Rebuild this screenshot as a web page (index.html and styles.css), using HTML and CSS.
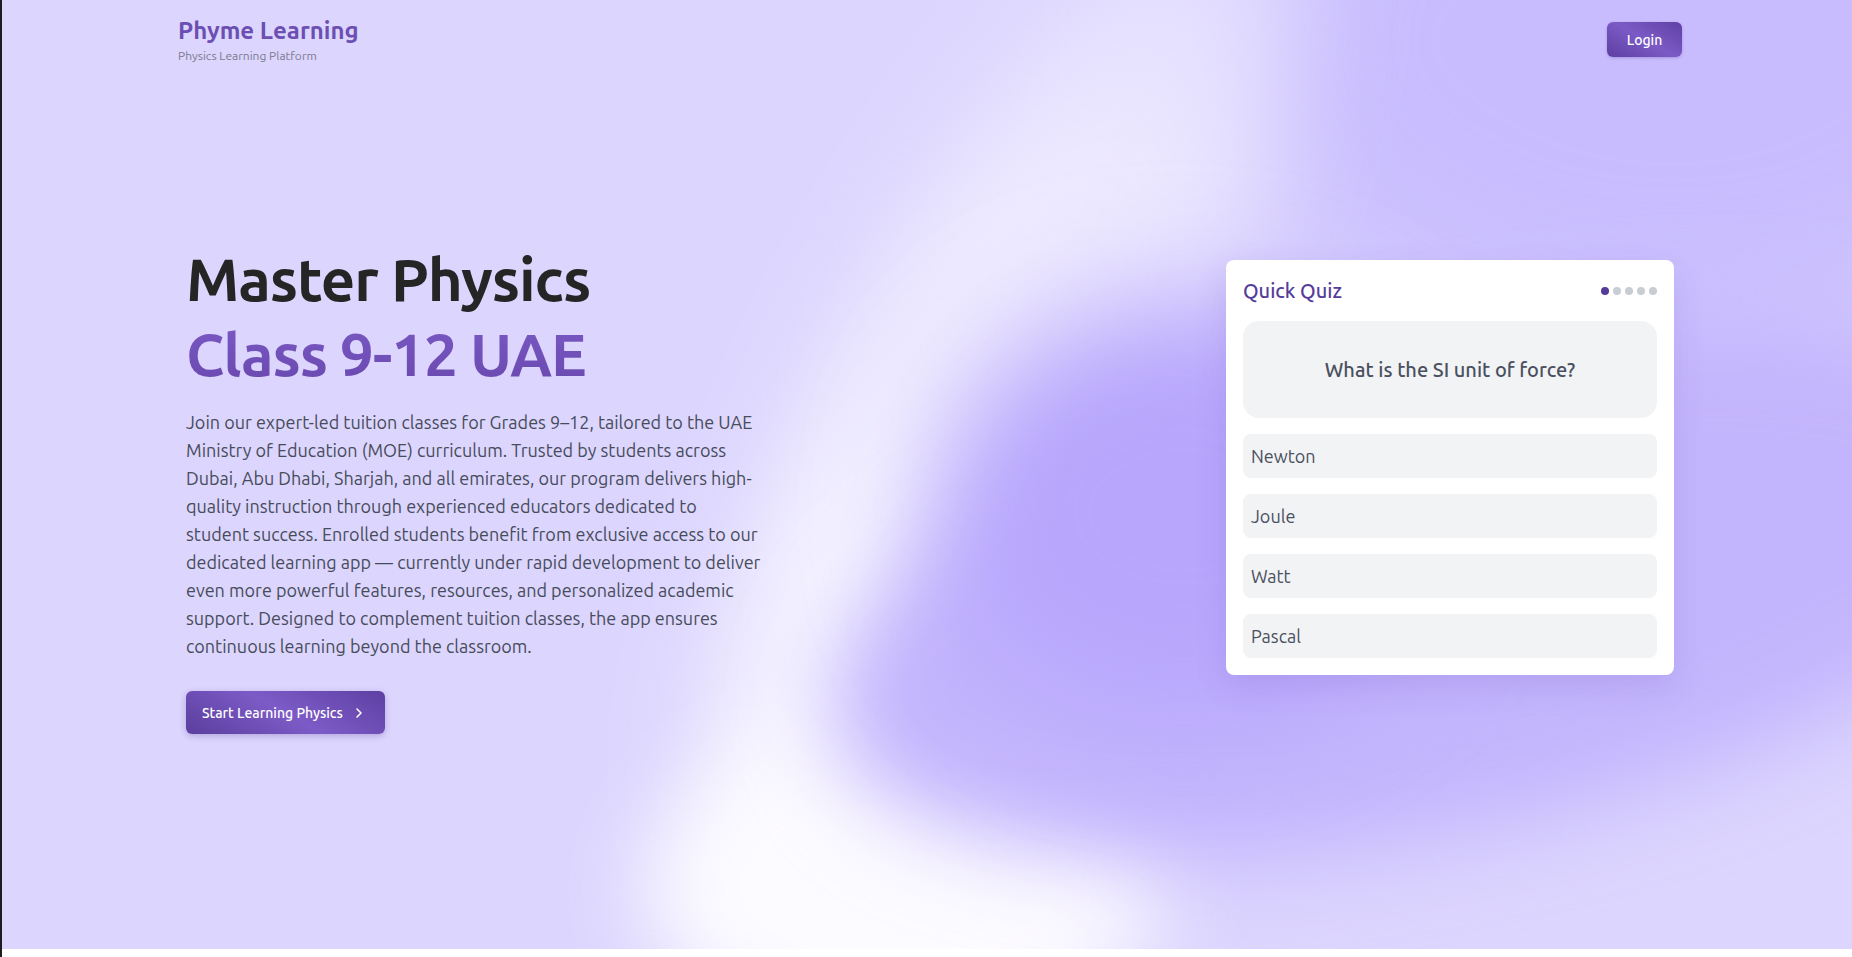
FILE: index.html
```html
<!DOCTYPE html>
<html lang="en">
<head>
<meta charset="utf-8">
<title>Phyme Learning</title>
<link rel="stylesheet" href="styles.css">
</head>
<body>
<div class="page">
  <div class="bg" aria-hidden="true">
    <span class="blob b-tr"></span>
    <span class="blob b-white"></span>
    <span class="blob b-bottom"></span>
    <span class="blob b-purple"></span>
    <span class="blob b-purple2"></span>
  </div>
  <header class="nav">
    <div class="brand">
      <div class="brand-name">Phyme Learning</div>
      <div class="brand-sub">Physics Learning Platform</div>
    </div>
    <button class="login">Login</button>
  </header>
  <main class="hero">
    <section class="intro">
      <h1 class="title"><span class="t1">Master Physics</span><span class="t2">Class 9-12 UAE</span></h1>
      <p class="lead">Join our expert-led tuition classes for Grades 9–12, tailored to the UAE Ministry of Education (MOE) curriculum. Trusted by students across Dubai, Abu Dhabi, Sharjah, and all emirates, our program delivers high-quality instruction through experienced educators dedicated to student success. Enrolled students benefit from exclusive access to our dedicated learning app — currently under rapid development to deliver even more powerful features, resources, and personalized academic support. Designed to complement tuition classes, the app ensures continuous learning beyond the classroom.</p>
      <button class="cta">Start Learning Physics
        <svg class="chev" viewBox="0 0 16 16" width="16" height="16"><path d="M6 4l4 4-4 4" fill="none" stroke="currentColor" stroke-width="1.6" stroke-linecap="round" stroke-linejoin="round"/></svg>
      </button>
    </section>
    <aside class="quiz">
      <div class="quiz-head">
        <h2 class="quiz-title">Quick Quiz</h2>
        <div class="dots"><span class="dot on"></span><span class="dot"></span><span class="dot"></span><span class="dot"></span><span class="dot"></span></div>
      </div>
      <div class="question">What is the SI unit of force?</div>
      <div class="options">
        <div class="option">Newton</div>
        <div class="option">Joule</div>
        <div class="option">Watt</div>
        <div class="option">Pascal</div>
      </div>
    </aside>
  </main>
</div>
</body>
</html>
```

FILE: styles.css
```css
* { box-sizing: border-box; }
html, body { margin: 0; padding: 0; }
body {
  background: #ffffff;
  border-left: 2px solid #1d1d21;
  font-family: "Ubuntu", "Noto Sans", sans-serif;
  min-height: 957px;
}
.page {
  position: relative;
  height: 949px;
  overflow: hidden;
}
.bg {
  position: absolute;
  inset: 0;
  background: #dcd5fe;
  z-index: 0;
  overflow: hidden;
}
.blob {
  position: absolute;
  border-radius: 50%;
  display: block;
}
.b-tr {
  left: 1220px; top: -280px; width: 900px; height: 640px;
  background: #c8bcfe;
  filter: blur(80px);
}
.b-white {
  left: 850px; top: -170px; width: 310px; height: 1100px;
  background: linear-gradient(180deg, rgba(232, 228, 255, 0.55) 0%, rgba(240, 237, 255, 0.9) 35%, rgba(248, 247, 255, 1) 65%, #fcfbff 100%);
  transform: rotate(28deg);
  filter: blur(55px);
}
.b-bottom {
  left: 640px; top: 730px; width: 520px; height: 320px;
  background: #fcfbff;
  filter: blur(45px);
}
.b-purple {
  left: 815px; top: 350px; width: 1276px; height: 480px;
  background: #c3b5fd;
  transform: rotate(-12deg);
  filter: blur(45px);
}
.b-purple2 {
  left: 930px; top: 300px; width: 500px; height: 420px;
  background: #b7a6fc;
  filter: blur(60px);
}
.nav {
  position: relative;
  z-index: 1;
  max-width: 1536px;
  margin: 0 auto;
  padding: 15px 13px 13px 19px;
  display: flex;
  justify-content: space-between;
  align-items: center;
}
.brand-name {
  font-size: 24px;
  line-height: 32px;
  font-weight: 700;
  color: #6c4fb2;
}
.brand-sub {
  margin-top: 1px;
  font-size: 12px;
  line-height: 16px;
  color: #7a7a8c;
}
.login {
  font-family: inherit;
  width: 75px;
  height: 35px;
  border: 0;
  border-radius: 6px;
  color: #fff;
  font-size: 14px;
  font-weight: 500;
  background: linear-gradient(30deg, #5b3f9f 0%, #7c5ac6 50%, #5e41a3 100%);
  box-shadow: 0 1px 3px rgba(60, 30, 120, 0.25);
}
.hero {
  position: relative;
  z-index: 1;
  display: flex;
  justify-content: space-between;
  align-items: flex-start;
  padding: 164px 178px 0 184px;
}
.intro {
  width: 576px;
}
.title {
  margin: 0;
  font-size: 60px;
  line-height: 75px;
  font-weight: 700;
  letter-spacing: -1.1px;
}
.t1 { display: block; color: #252526; }
.t2 {
  display: block;
  background: linear-gradient(180deg, #7c5ac5 0%, #6847ae 100%);
  -webkit-background-clip: text;
  background-clip: text;
  color: transparent;
}
.lead {
  margin: 17px 0 0;
  font-size: 18px;
  line-height: 28px;
  color: #474c5a;
}
.cta {
  margin-top: 31px;
  font-family: inherit;
  display: inline-flex;
  align-items: center;
  gap: 8px;
  height: 43px;
  padding: 0 18px 0 16px;
  border: 0;
  border-radius: 6px;
  color: #fff;
  font-size: 14px;
  font-weight: 500;
  background: linear-gradient(30deg, #5a3e9d 0%, #7d5bc7 50%, #5d40a2 100%);
  box-shadow: 0 2px 6px rgba(60, 30, 120, 0.25);
}
.chev { display: block; }
.quiz {
  margin-top: 19px;
  width: 448px;
  background: #fff;
  border-radius: 8px;
  padding: 17px;
  box-shadow: 0 12px 32px rgba(90, 60, 170, 0.14);
}
.quiz-head {
  display: flex;
  justify-content: space-between;
  align-items: center;
  height: 28px;
}
.quiz-title {
  margin: 0;
  font-size: 20px;
  line-height: 28px;
  font-weight: 500;
  color: #553c9a;
}
.dots { display: flex; gap: 4px; }
.dot {
  width: 8px; height: 8px; border-radius: 50%;
  background: #c8ccd3;
}
.dot.on { background: #553c9a; }
.question {
  margin-top: 16px;
  background: #f2f3f5;
  border-radius: 16px;
  padding: 34px 16px;
  text-align: center;
  font-size: 20px;
  line-height: 29px;
  font-weight: 500;
  color: #4a5060;
}
.options {
  margin-top: 16px;
  display: flex;
  flex-direction: column;
  gap: 16px;
}
.option {
  height: 44px;
  display: flex;
  align-items: center;
  padding: 0 8px;
  background: #f2f3f5;
  border-radius: 8px;
  font-size: 18px;
  color: #4a5060;
}
```
